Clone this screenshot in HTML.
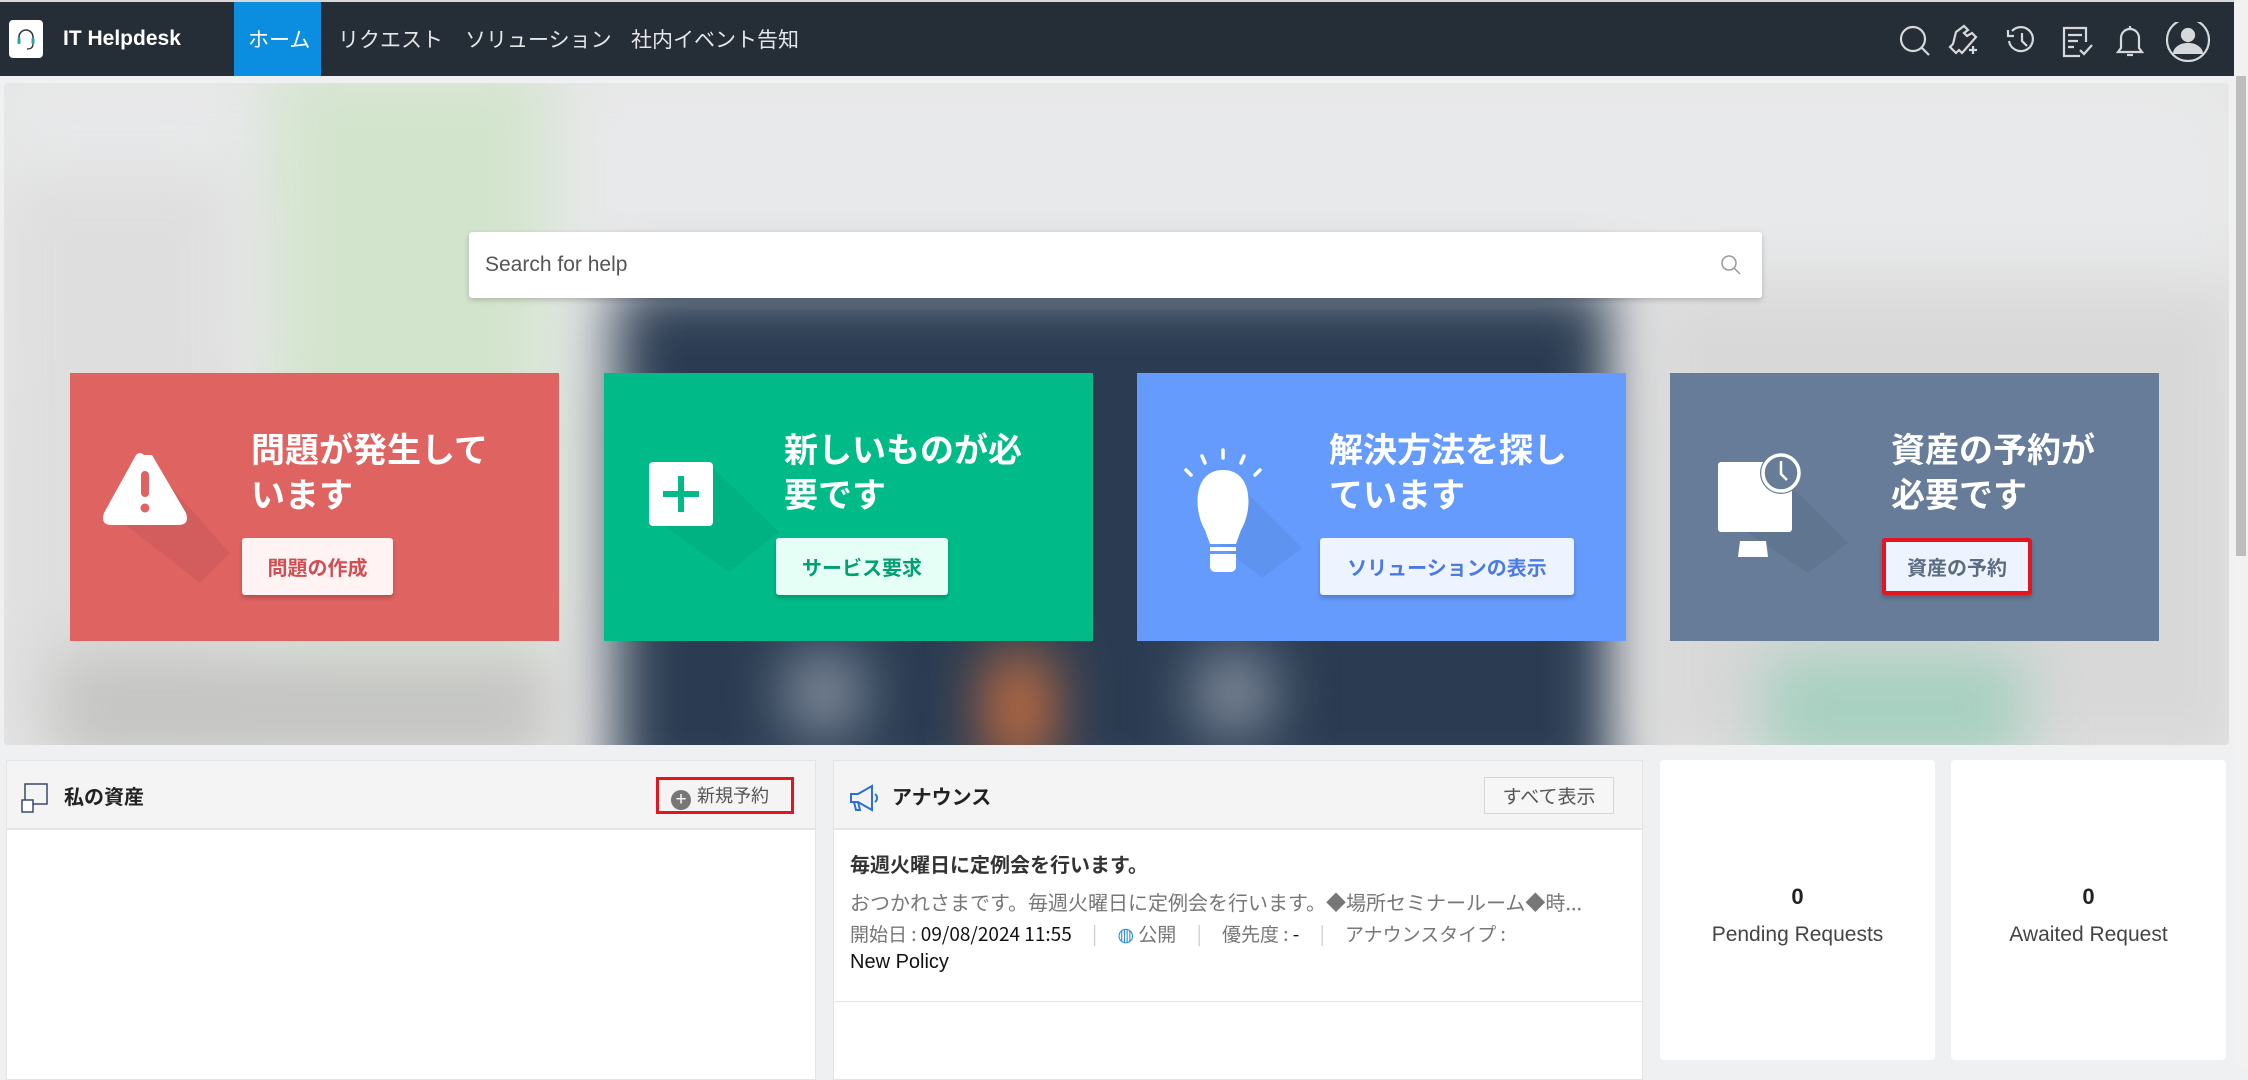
<!DOCTYPE html>
<html><head><meta charset="utf-8"><style>
*{box-sizing:border-box;margin:0;padding:0}
body{width:2248px;height:1068px;overflow:hidden;background:#eef0f2;font-family:"Liberation Sans","Noto Sans CJK JP",sans-serif;position:relative}
.hdr{position:absolute;left:0;top:0;width:2234px;height:76px;background:#252d36;border-top:2px solid #d8d8d8}
.nav{position:absolute;top:0;height:74px;line-height:74px;color:#e4e7ea;font-size:21px;font-family:"Noto Sans CJK JP",sans-serif}
.hero{position:absolute;left:4px;top:83px;width:2225px;height:662px;overflow:hidden;background:#e6e6e6;border-radius:4px}
.blob{position:absolute;filter:blur(30px)}
.search{position:absolute;left:469px;top:232px;width:1293px;height:66px;background:#fff;border-radius:3px;box-shadow:0 2px 6px rgba(0,0,0,.2);font-size:21px;color:#555;line-height:66px;padding-left:16px}
.card{position:absolute;top:373px;width:489px;height:268px;color:#fff}
.card .t{position:absolute;top:52px;font-size:34px;font-weight:bold;line-height:45px;font-family:"Noto Sans CJK JP",sans-serif}
.card .b{position:absolute;top:165px;height:57px;line-height:57px;text-align:center;font-size:20px;font-weight:bold;border-radius:3px;box-shadow:0 3px 4px rgba(0,0,0,.2);font-family:"Noto Sans CJK JP",sans-serif}
.card svg{position:absolute}
.panel{position:absolute;top:760px;background:#fff;height:320px;border:1px solid #e4e4e4}
.ph{height:69px;background:#f4f4f4;border-bottom:2px solid #e6e6e6;position:relative}
.ptitle{position:absolute;top:0;line-height:69px;font-size:20px;font-weight:bold;color:#222;font-family:"Noto Sans CJK JP",sans-serif}
.stat{position:absolute;top:760px;width:275px;height:300px;background:#fff;border-radius:4px;text-align:center;color:#444}
.stat .n{position:absolute;top:124px;width:100%;font-size:22px;font-weight:bold;color:#222}
.stat .l{position:absolute;top:163px;width:100%;font-size:21px}
.jp{font-family:"Noto Sans CJK JP",sans-serif}
</style></head><body>
<div class="hdr">
  <div style="position:absolute;left:9px;top:18px;width:34px;height:38px;background:#fff;border-radius:4px">
    <svg width="34" height="38" viewBox="0 0 34 38"><path d="M10 20 v-3 a7 7 0 0 1 14 0 v3" fill="none" stroke="#333" stroke-width="1.5"/><rect x="8.5" y="18" width="3" height="6" rx="1" fill="#2aa0b0"/><rect x="22.5" y="18" width="3" height="6" rx="1" fill="#2aa0b0"/><path d="M24 24 q0 5 -6 5" fill="none" stroke="#333" stroke-width="1.3"/></svg>
  </div>
  <div style="position:absolute;left:63px;top:0;line-height:74px;color:#fff;font-size:21px;font-weight:bold">IT Helpdesk</div>
  <div style="position:absolute;left:234px;top:0;width:87px;height:74px;background:#0b8edf"></div>
  <div class="nav" style="left:248px;color:#fff">ホーム</div>
  <div class="nav" style="left:338px">リクエスト</div>
  <div class="nav" style="left:465px">ソリューション</div>
  <div class="nav" style="left:631px">社内イベント告知</div>
  <svg style="position:absolute;left:1896px;top:20px" width="340" height="40" viewBox="0 0 340 40" fill="none" stroke="#d6d9dc" stroke-width="2.2">
    <circle cx="17" cy="17" r="12"/><path d="M26 26 l7 7"/>
    <path d="M60 10 l8 -6 l4 4 l-4 3 l3 3 l5 -3 l4 4 l-14 16 l-3 -3 l-3 3 l-6 -6 l3 -3 z"/><path d="M73 28 h8 M77 24 v8"/>
    <path d="M116 9 a12 12 0 1 1 -3 10"/><path d="M112 8 v6 h6"/><path d="M126 11 v8 l5 5"/>
    <path d="M184 34 h-16 v-28 h22 v14"/><path d="M172 13 h14 M172 19 h10 M172 25 h6"/><path d="M184 28 l4 4 l8 -9"/>
    <path d="M222 30 h24 l-3 -4 v-10 a9 9 0 0 0 -18 0 v10 z"/><path d="M231 33 h6"/><path d="M234 4 v3"/>
    <circle cx="292" cy="18" r="21"/><circle cx="292" cy="13" r="6" fill="#d6d9dc"/><path d="M278 32 a14 10 0 0 1 28 0" fill="#d6d9dc"/>
  </svg>
</div>
<div style="position:absolute;left:2234px;top:0;width:14px;height:1068px;background:#f1f1f1"></div>
<div style="position:absolute;left:2236px;top:76px;width:10px;height:480px;background:#bdbdbd"></div>

<div class="hero">
  <div class="blob" style="left:0;top:0;width:2225px;height:300px;background:#e8e9ea"></div>
  <div class="blob" style="left:268px;top:-20px;width:280px;height:580px;background:#d3e4cd"></div>
  <div class="blob" style="left:0;top:90px;width:230px;height:580px;background:#dedede"></div>
  <div class="blob" style="left:610px;top:200px;width:1000px;height:520px;background:#2b3c52"></div>
  <div class="blob" style="left:1640px;top:200px;width:600px;height:480px;background:#d8d8d8"></div>
  <div class="blob" style="left:1760px;top:570px;width:260px;height:110px;background:#a6d0c0"></div>
  <div class="blob" style="left:985px;top:570px;width:60px;height:110px;background:#d9743e"></div>
  <div class="blob" style="left:785px;top:570px;width:70px;height:80px;background:#8c97a6"></div>
  <div class="blob" style="left:1195px;top:570px;width:70px;height:80px;background:#8c97a6"></div>
  <div class="blob" style="left:50px;top:570px;width:500px;height:110px;background:#c4c5c2"></div>
</div>
<div class="search">Search for help
  <svg style="position:absolute;right:20px;top:22px" width="22" height="22" viewBox="0 0 22 22" fill="none" stroke="#999" stroke-width="1.5"><circle cx="9" cy="9" r="7"/><path d="M14 14 l6 6"/></svg>
</div>

<div class="card" style="left:70px;background:#df6361">
  <svg style="left:30px;top:70px" width="160" height="170" viewBox="0 0 160 170"><path d="M40 10 L130 110 L100 140 L10 70 Z" fill="rgba(0,0,0,.05)"/><path d="M44 12 q-4 -4 -8 0 L4 70 q-4 12 8 12 h66 q12 0 8 -12 L52 12 z" fill="#fff"/><rect x="41" y="28" width="8" height="26" rx="4" fill="#df6361"/><circle cx="45" cy="65" r="4.5" fill="#df6361"/></svg>
  <div class="t" style="left:181px">問題が発生して<br>います</div>
  <div class="b" style="left:172px;width:151px;background:#fff3f3;color:#d34e52">問題の作成</div>
</div>
<div class="card" style="left:604px;background:#00bb88">
  <svg style="left:45px;top:89px" width="140" height="140" viewBox="0 0 140 140"><path d="M60 2 L130 70 L80 110 L10 60 Z" fill="rgba(0,0,0,.05)"/><rect x="0" y="0" width="64" height="64" rx="4" fill="#fff"/><rect x="29" y="14" width="6" height="36" fill="#00bb88"/><rect x="14" y="29" width="36" height="6" fill="#00bb88"/></svg>
  <div class="t" style="left:180px">新しいものが必<br>要です</div>
  <div class="b" style="left:172px;width:172px;background:#e6fff6;color:#00a072">サービス要求</div>
</div>
<div class="card" style="left:1137px;background:#659bfd">
  <svg style="left:45px;top:75px" width="140" height="150" viewBox="0 0 140 150"><path d="M50 30 L120 100 L80 130 L30 90 Z" fill="rgba(0,0,0,.05)"/><path d="M41 22 c-30 0 -30 40 -18 60 l5 14 h26 l5 -14 c12 -20 12 -60 -18 -60z" fill="#fff"/><rect x="28" y="99" width="26" height="4" fill="#fff"/><path d="M28 106 h26 v12 q0 6 -6 6 h-14 q-6 0 -6 -6 z" fill="#fff"/><g stroke="#fff" stroke-width="3.5" stroke-linecap="round"><path d="M41 2 v8 M20 8 l3 7 M62 8 l-3 7 M4 22 l5 5 M78 22 l-5 5"/></g></svg>
  <div class="t" style="left:192px">解決方法を探し<br>ています</div>
  <div class="b" style="left:183px;width:254px;background:#eef4ff;color:#4b7be2">ソリューションの表示</div>
</div>
<div class="card" style="left:1670px;background:#667c98">
  <svg style="left:48px;top:60px" width="150" height="170" viewBox="0 0 150 170"><path d="M60 40 L130 110 L90 140 L30 100 Z" fill="rgba(0,0,0,.05)"/><rect x="0" y="29" width="74" height="70" rx="3" fill="#fff"/><path d="M22 108 h26 l2 16 h-30 z" fill="#fff"/><circle cx="63" cy="40" r="21" fill="#667c98"/><circle cx="63" cy="40" r="18" fill="none" stroke="#fff" stroke-width="3.5"/><path d="M63 28 v13 l6 6" fill="none" stroke="#fff" stroke-width="2.5"/></svg>
  <div class="t" style="left:221px">資産の予約が<br>必要です</div>
  <div class="b" style="left:212px;width:150px;background:#eef4ff;color:#5b6b82;border:4px solid #e5151f;line-height:49px">資産の予約</div>
</div>

<div class="panel" style="left:6px;width:810px">
  <div class="ph">
    <svg style="position:absolute;left:14px;top:22px" width="30" height="30" viewBox="0 0 30 30" fill="none" stroke="#3a4a6a" stroke-width="1.5"><rect x="4" y="1" width="22" height="20"/><rect x="1" y="17" width="11" height="12" fill="#fff"/></svg>
    <div class="ptitle" style="left:57px">私の資産</div>
    <div style="position:absolute;left:649px;top:16px;width:138px;height:37px;border:3px solid #e5151f;background:#f4f4f4;line-height:31px;font-size:18px;color:#555" class="jp"><span style="display:inline-block;width:20px;height:20px;border-radius:50%;background:#777;color:#fff;text-align:center;line-height:19px;font-size:19px;margin:0 6px 0 12px;vertical-align:-3px;font-family:'Liberation Sans'">+</span>新規予約</div>
  </div>
</div>
<div class="panel" style="left:833px;width:810px">
  <div class="ph">
    <svg style="position:absolute;left:14px;top:22px" width="32" height="30" viewBox="0 0 32 30" fill="none" stroke="#2c6fd8" stroke-width="2"><path d="M3 11 h7 l14 -8 v24 l-14 -8 h-7 z"/><path d="M6 19 l2 8 h4 l-2 -8"/><path d="M27 11 a5 5 0 0 1 0 8"/></svg>
    <div class="ptitle" style="left:58px">アナウンス</div>
    <div style="position:absolute;left:650px;top:16px;width:130px;height:37px;border:1px solid #d6d6d6;background:#f6f6f6;line-height:35px;text-align:center;font-size:19px;color:#555" class="jp">すべて表示</div>
  </div>
  <div style="position:absolute;left:16px;top:88px;font-size:20px;font-weight:bold;color:#333" class="jp">毎週火曜日に定例会を行います。</div>
  <div style="position:absolute;left:16px;top:126px;font-size:20px;color:#777;white-space:nowrap" class="jp">おつかれさまです。毎週火曜日に定例会を行います。◆場所セミナールーム◆時...</div>
  <div style="position:absolute;left:16px;top:159px;font-size:19px;color:#777;white-space:nowrap" class="jp">開始日 : <span style="color:#111">09/08/2024 11:55</span> <span style="color:#ccc;margin:0 16px">|</span> <span style="color:#2c8ae0">◍</span> 公開 <span style="color:#ccc;margin:0 16px">|</span> 優先度 : <span style="color:#111">-</span> <span style="color:#ccc;margin:0 16px">|</span> アナウンスタイプ :</div>
  <div style="position:absolute;left:16px;top:190px;font-size:20px;color:#111">New Policy</div>
  <div style="position:absolute;left:0;top:240px;width:100%;border-top:1px solid #e6e6e6"></div>
</div>
<div class="stat" style="left:1660px"><div class="n">0</div><div class="l">Pending Requests</div></div>
<div class="stat" style="left:1951px"><div class="n">0</div><div class="l">Awaited Request</div></div>
</body></html>
